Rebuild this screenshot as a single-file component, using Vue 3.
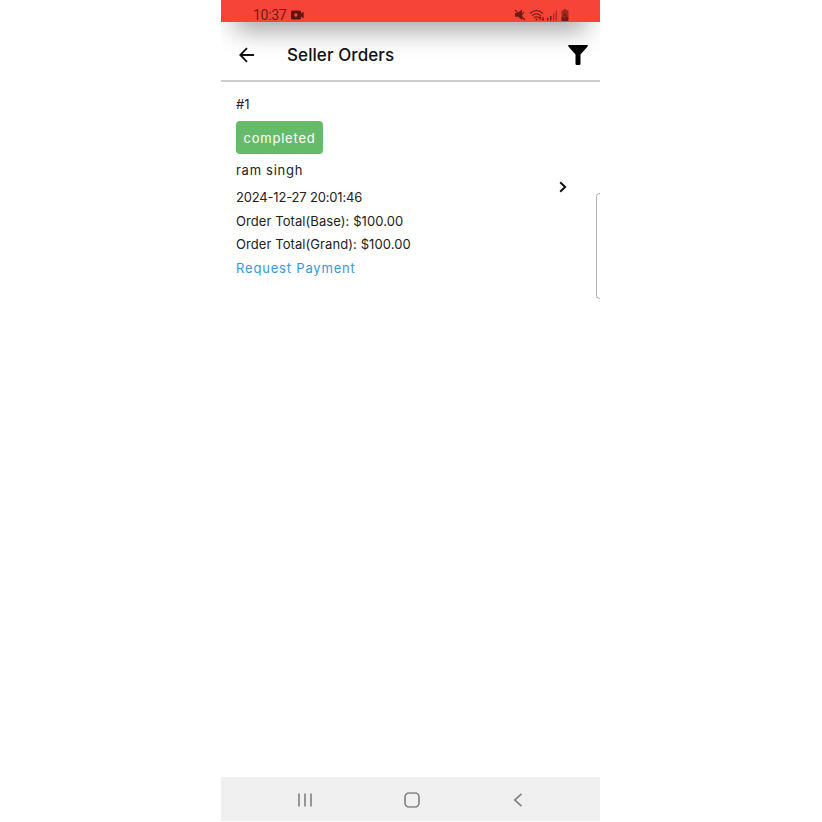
<script setup>
const details = [
  { text: '2024-12-27 20:01:46', kind: 'date' },
  { text: 'Order Total(Base): $100.00', kind: 'base' },
  { text: 'Order Total(Grand): $100.00', kind: 'grand' },
]
</script>

<template>
  <div class="page">
    <main class="phone">
      <header class="status">
        <span class="clock">10:37</span>
        <svg class="camera" viewBox="0 0 14 10">
          <path fill-rule="evenodd" d="M1.5.5h7Q10 .5 10 2v1.6l1.2-.7v-1h1.4v6.2h-1.4v-1L10 6.4V8Q10 9.5 8.5 9.5h-7Q0 9.5 0 8V2Q0 .5 1.5.5zM4.9 3.3a1.7 1.7 0 1 0 0 3.4 1.7 1.7 0 0 0 0-3.4z" />
        </svg>
        <svg class="signals" viewBox="0 0 58 14">
          <path d="M1 5h2.5L8 1.5v4l2-2 .6.6L8.2 7v5L4 8.8H1z" />
          <path class="line" d="M1 2l10 10" />
          <path class="line" d="M16 5.5q6.5-6 13 0M18 7.7q4.5-4 9 0M20 9.8q2.5-2 5 0" />
          <circle cx="22.5" cy="11.5" r="1" />
          <path d="M26 8l1.7 2h-1v2h-1.3v-2h-1zM29 13l-1.7-2h1V9h1.3v2h1z" />
          <path d="M33 10h1.5v2.5H33zM36 8h1.5v4.5H36z" />
          <path opacity=".55" d="M39 5.5h1.4v7H39zM41.6 2.5H43v10h-1.4z" />
          <path opacity=".65" d="M49.5 1.2h3v1h1.2q.8 0 .8.8v6h-7V3q0-.8.8-.8h1.2z" />
          <path d="M47.5 9h7v3.2q0 .8-.8.8h-5.4q-.8 0-.8-.8zM51.5 3.5L49.3 8h1.5l-.5 3 2.5-4.5h-1.5z" />
        </svg>
      </header>
      <nav class="appbar">
        <svg class="back" viewBox="0 0 16 16"><path d="M15 8H1.5M8 1.2L1.3 8 8 14.8" /></svg>
        <h1><span>Seller Orders</span></h1>
        <svg class="filter" viewBox="0 0 20 20">
          <path d="M.8 0h18.4q1.1.6.4 1.6L12.5 9.5v9.3q0 1.2-1.2 1.2H8.7q-1.2 0-1.2-1.2V9.5L.4 1.6Q-.3.6.8 0z" />
        </svg>
      </nav>
      <section class="orders">
        <article class="order">
          <p class="number">#1</p>
          <span class="badge"><span>completed</span></span>
          <p class="name">ram singh</p>
          <p v-for="d in details" :key="d.kind" :class="d.kind">{{ d.text }}</p>
          <a class="request">Request Payment</a>
        </article>
        <svg class="chevron" viewBox="0 0 8 12"><path d="M1.2 1.2L6.1 6l-4.9 4.8" /></svg>
        <div class="handle"></div>
      </section>
      <footer class="navigation">
        <svg class="recents" viewBox="0 0 14 14"><path d="M1 .4v13.2M7 .4v13.2M13 .4v13.2" /></svg>
        <svg class="home" viewBox="0 0 16 16"><rect x="1" y="1" width="14" height="14" rx="4" /></svg>
        <svg class="return" viewBox="0 0 10 14"><path d="M8.5.8L1.7 7l6.8 6.2" /></svg>
      </footer>
    </main>
  </div>
</template>

<style>
body { background: #fff; overflow: hidden; }
</style>

<style scoped>
* { box-sizing: border-box; }
svg { display: block; flex: none; }
.page { width: 822px; height: 822px; padding-left: 221px; overflow: hidden; background: #fff; }
.phone { width: 379px; height: 821px; display: flex; flex-direction: column; overflow: hidden; font-family: "Inter", "Noto Sans", sans-serif; font-size: 13px; color: #222; }
.status { height: 22px; flex: none; padding: 8px 28px 0 32px; display: flex; align-items: flex-start; background: #f64438; color: #701c16; z-index: 1; }
.clock { font: 14px/14px Roboto, sans-serif; width: 34px; white-space: nowrap; letter-spacing: -.3px; }
.camera { width: 14px; height: 10px; margin: 2px 0 0 4px; fill: #5c1510; }
.signals { width: 58px; height: 14px; margin: 0 0 0 auto; fill: #701c16; }
.signals .line { fill: none; stroke: #701c16; stroke-width: 1.1; }
.appbar { height: 60px; flex: none; padding: 0 12px 0 18px; display: flex; align-items: center; position: relative; border-bottom: 2px solid #cecece; }
.appbar::before { content: ""; position: absolute; left: 14px; right: 14px; top: -30px; height: 30px; box-shadow: 0 8px 26px 0 rgba(0, 0, 0, .38); }
.appbar > * { position: relative; }
.back { width: 16px; height: 16px; margin-top: 8px; fill: none; stroke: #111; stroke-width: 1.8; }
h1 { margin: 7px 0 0 32px; font-size: 17px; line-height: 22px; font-weight: 500; color: #111; white-space: nowrap; letter-spacing: .08px; }
.filter { width: 20px; height: 20px; margin: 8px 0 0 auto; fill: #000; }
.orders { flex: 1; display: flex; align-items: flex-start; padding: 12px 0 0 15px; }
.order { width: 323px; display: flex; flex-direction: column; align-items: flex-start; white-space: nowrap; }
p { margin: 0; line-height: 20px; }
.badge { width: 87px; height: 33px; margin: 7px 0 6px; display: flex; align-items: center; justify-content: center; border-radius: 4px; background: #66bb6a; color: #fff; letter-spacing: .8px; }
.name { letter-spacing: .72px; }
.date { margin-top: 7px; letter-spacing: -.18px; }
.base { margin-top: 4px; letter-spacing: .08px; }
.grand { margin-top: 3px; letter-spacing: .08px; }
.request { margin-top: 4px; line-height: 20px; color: #3b96db; letter-spacing: .82px; }
.chevron { width: 8px; height: 12px; margin-top: 86.5px; fill: none; stroke: #111; stroke-width: 2; }
.handle { width: 4px; height: 106px; margin: 99px 0 0 auto; border: 1px solid #b4b4b4; border-right: 0; border-radius: 4px 0 0 4px; }
.navigation { height: 44px; flex: none; padding: 2px 77px 0 77px; display: flex; align-items: center; justify-content: space-between; background: #f0f0f0; fill: none; stroke: #868686; stroke-width: 1.7; }
.recents { width: 14px; height: 14px; }
.home { width: 16px; height: 16px; margin-left: -2px; }
.return { width: 10px; height: 14px; }
</style>
